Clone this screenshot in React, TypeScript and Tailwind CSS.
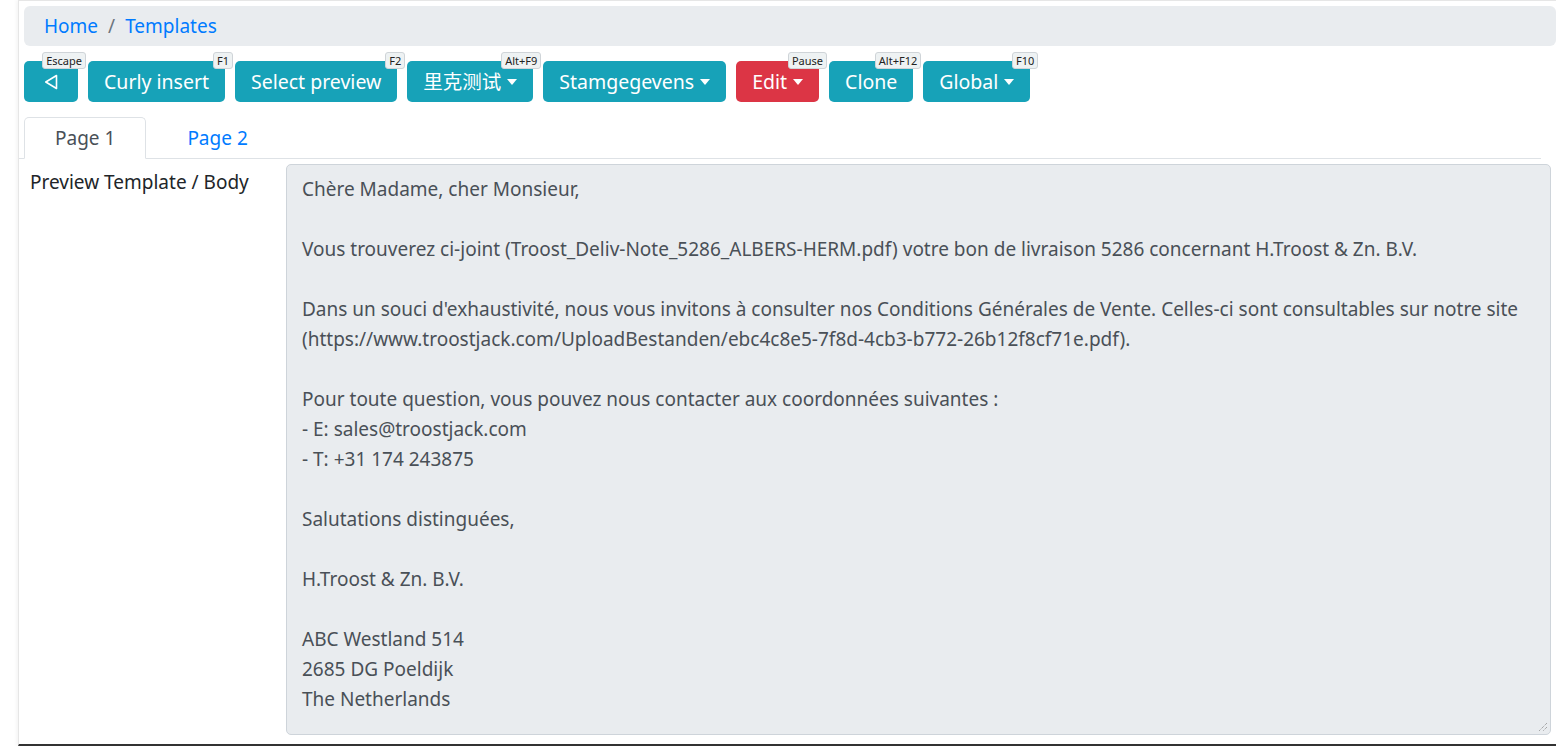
import React, { useState } from "react";

const font = { fontFamily: '"Noto Sans", "Noto Sans CJK SC", sans-serif' };

type Btn = { label: string; key: string; caret?: boolean; red?: boolean };

const buttons: Btn[] = [
  { label: "Curly insert", key: "F1" },
  { label: "Select preview", key: "F2" },
  { label: "里克测试", key: "Alt+F9", caret: true },
  { label: "Stamgegevens", key: "", caret: true },
  { label: "Edit", key: "Pause", caret: true, red: true },
  { label: "Clone", key: "Alt+F12" },
  { label: "Global", key: "F10", caret: true },
];

const body = [
  "Chère Madame, cher Monsieur,",
  "",
  "Vous trouverez ci-joint (Troost_Deliv-Note_5286_ALBERS-HERM.pdf) votre bon de livraison 5286 concernant H.Troost & Zn. B.V.",
  "",
  "Dans un souci d'exhaustivité, nous vous invitons à consulter nos Conditions Générales de Vente. Celles-ci sont consultables sur notre site",
  "(https://www.troostjack.com/UploadBestanden/ebc4c8e5-7f8d-4cb3-b772-26b12f8cf71e.pdf).",
  "",
  "Pour toute question, vous pouvez nous contacter aux coordonnées suivantes :",
  "- E: sales@troostjack.com",
  "- T: +31 174 243875",
  "",
  "Salutations distinguées,",
  "",
  "H.Troost & Zn. B.V.",
  "",
  "ABC Westland 514",
  "2685 DG Poeldijk",
  "The Netherlands",
];

function KeyBadge({ k }: { k: string }) {
  if (!k) return null;
  return (
    <span className="absolute -top-[9px] -right-[8px] rounded-[3px] border border-[#cfd4d8] bg-[#eef2f3] px-[3px] text-[11px] leading-[15px] text-[#222]">
      {k}
    </span>
  );
}

function Caret() {
  return <span className="ml-[6px] inline-block h-0 w-0 border-x-[5px] border-t-[6px] border-x-transparent border-t-white align-[3px]" />;
}

export default function App() {
  const [tab, setTab] = useState(1);

  return (
    <div className="flex h-[746px] w-[1556px] overflow-hidden bg-white text-[18px]" style={font}>
      <div className="w-[18px] shrink-0" />
      <div className="flex min-w-0 flex-1 flex-col border-l border-t border-[#e6e6e6] border-b-2 border-b-[#333] shadow-[-2px_0_3px_rgba(0,0,0,0.04)]">
        <div className="pl-[5px] pt-[5px]">
          <nav className="flex h-[40px] items-center rounded-[6px] bg-[#e9ecef] px-[20px] text-[19px]">
            <a className="text-[#007bff]">Home</a>
            <span className="px-[10px] text-[#6c757d]">/</span>
            <a className="text-[#007bff]">Templates</a>
          </nav>
        </div>

        <div className="flex gap-[10px] px-[5px] pt-[15px]">
          <button className="relative flex h-[41px] w-[54px] items-center justify-center rounded-[5px] bg-[#17a2b8] text-white">
            <svg width="14" height="16" viewBox="0 0 14 16" fill="none" stroke="white" strokeWidth="1.6">
              <path d="M12.5 1.5 L1.8 8 L12.5 14.5 Z" strokeLinejoin="round" />
            </svg>
            <KeyBadge k="Escape" />
          </button>
          {buttons.map((b) => (
            <button
              key={b.label}
              className={`relative flex h-[41px] items-center rounded-[5px] px-[16px] text-[19.5px] text-white ${b.red ? "bg-[#dc3545]" : "bg-[#17a2b8]"}`}
            >
              {b.label}
              {b.caret && <Caret />}
              <KeyBadge k={b.key} />
            </button>
          ))}
        </div>

        <div className="mt-[15px] mr-[15px] flex gap-[10px] border-b border-[#dee2e6] px-[5px]">
          {[1, 2].map((p) => (
            <button
              key={p}
              onClick={() => setTab(p)}
              className={`-mb-px flex h-[42px] items-center justify-center rounded-t-[5px] border px-[30px] text-[19px] ${
                tab === p ? "border-[#dee2e6] border-b-white bg-white text-[#495057]" : "border-transparent text-[#007bff]"
              }`}
            >
              Page {p}
            </button>
          ))}
        </div>

        <div className="flex min-h-0 flex-1 pb-[9px] pt-[5px] pr-[5px]">
          <div className="w-[267px] shrink-0 pl-[11px] pt-[3px] text-[19px] leading-[30px] text-[#212529]">Preview Template / Body</div>
          <div className="relative flex-1 rounded-[5px] border border-[#ced4da] bg-[#e9ecef] px-[15px] pt-[9px] text-[19px] leading-[30px] text-[#495057]">
            {body.map((l, i) => (
              <div key={i} className="h-[30px] whitespace-nowrap">
                {l}
              </div>
            ))}
            <svg className="absolute bottom-[2px] right-[2px]" width="10" height="10" viewBox="0 0 10 10" stroke="#888" strokeWidth="1" strokeDasharray="1 1">
              <path d="M9 1 L1 9 M9 5 L5 9" />
            </svg>
          </div>
        </div>
      </div>
    </div>
  );
}
